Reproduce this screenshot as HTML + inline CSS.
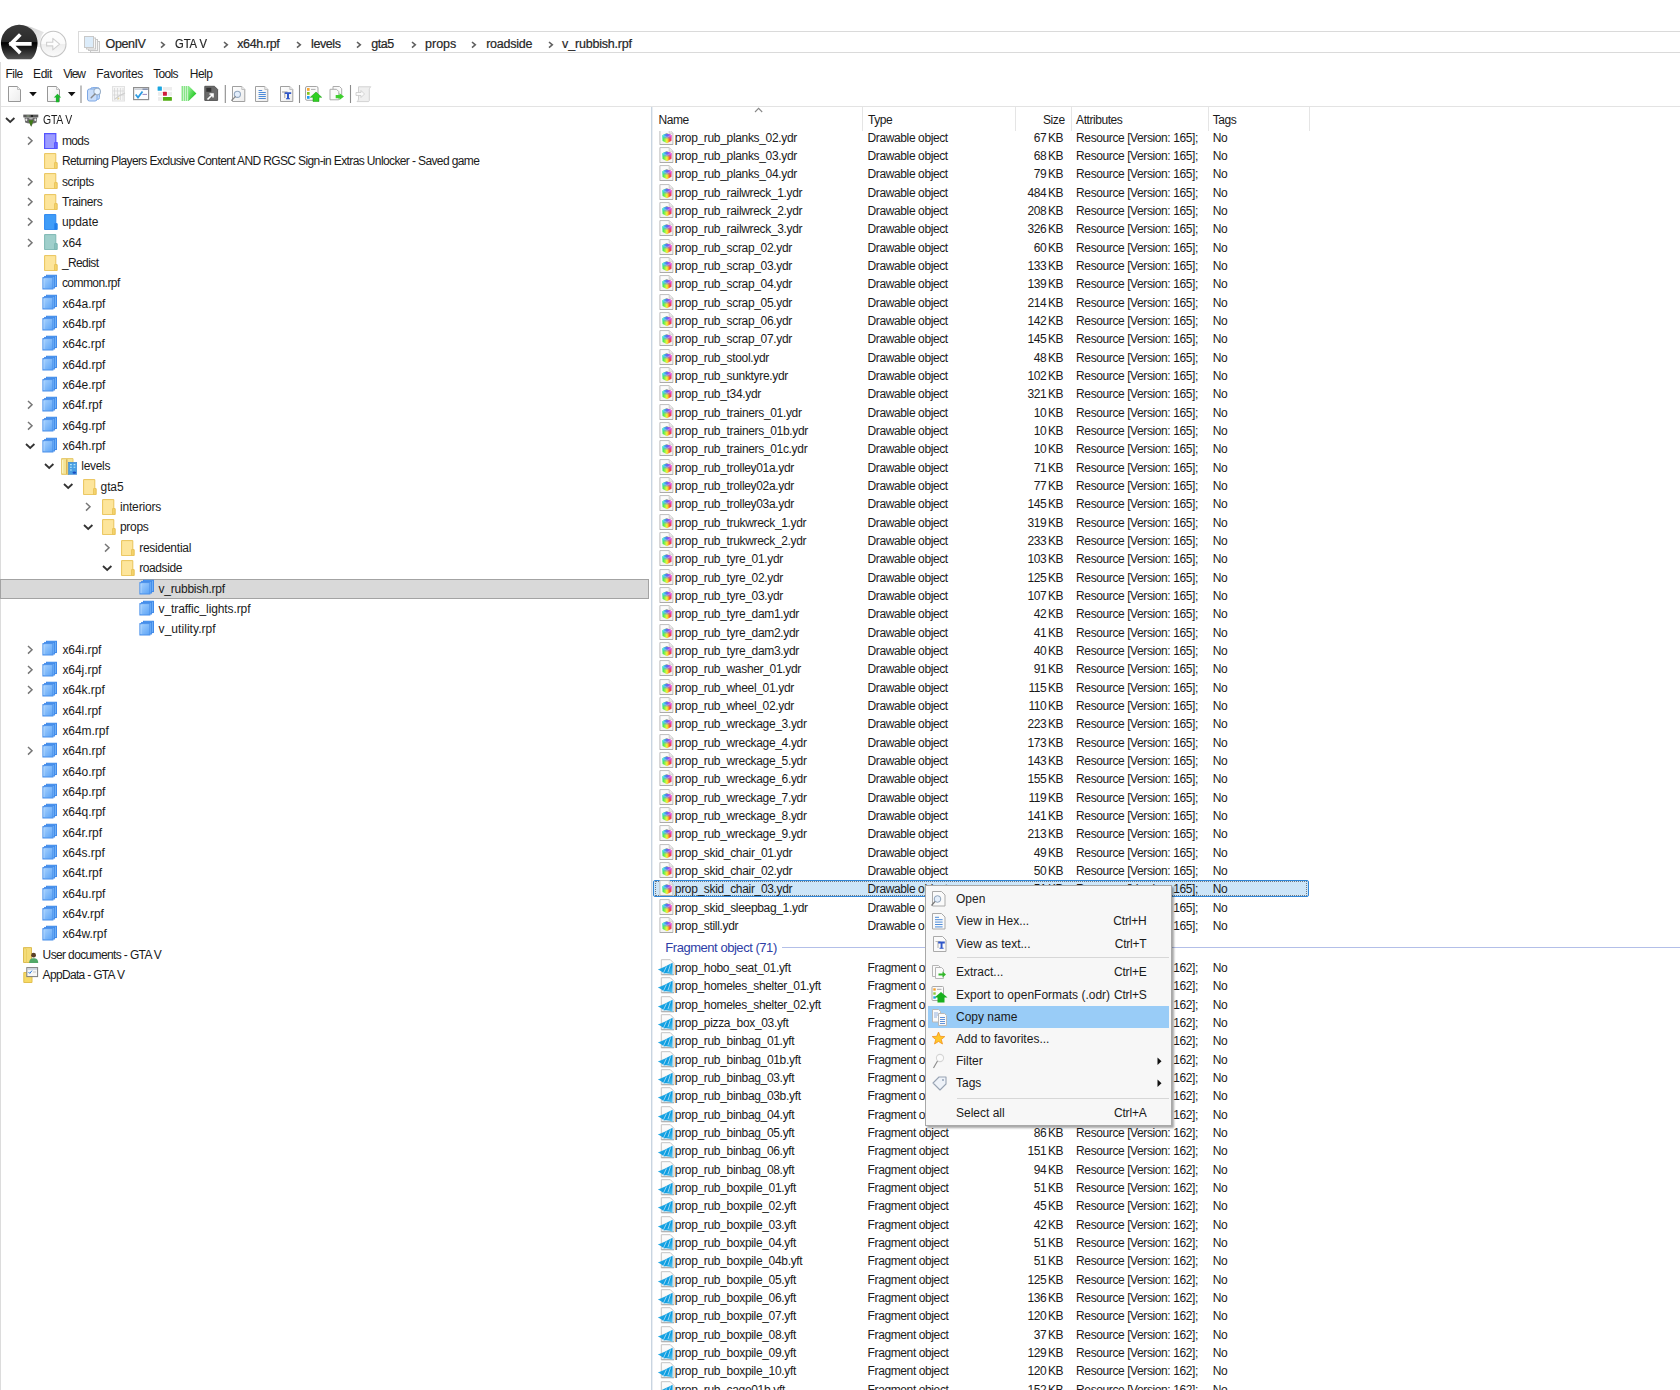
<!DOCTYPE html><html><head><meta charset="utf-8"><title>OpenIV</title><style>
*{margin:0;padding:0;box-sizing:border-box}
html,body{width:1680px;height:1390px;overflow:hidden;background:#fff}
body{position:relative;font-family:'Liberation Sans', sans-serif;font-size:12px;color:#000}
.t{position:absolute;white-space:nowrap;font-size:12px;line-height:14px;letter-spacing:-0.45px;color:#1a1a1a}
.r{text-align:right}
.ic{position:absolute;overflow:visible}
.ln{position:absolute}
</style></head><body>
<svg width="0" height="0" style="position:absolute">
<defs>
<linearGradient id="gBlue" x1="0" y1="0" x2="1" y2="1"><stop offset="0" stop-color="#a9d3ff"/><stop offset="1" stop-color="#5aa2f5"/></linearGradient>
<linearGradient id="gBlk" x1="0" y1="0" x2="0" y2="1"><stop offset="0" stop-color="#3a3a3a"/><stop offset="0.5" stop-color="#2a2a2a"/><stop offset="0.52" stop-color="#000"/><stop offset="1" stop-color="#555"/></linearGradient>
<radialGradient id="gCube" cx="0.35" cy="0.6" r="0.7"><stop offset="0" stop-color="#20e030"/><stop offset="0.5" stop-color="#f0f030"/><stop offset="1" stop-color="#f04080"/></radialGradient>
<symbol id="rpf" viewBox="0 0 16 16">
 <path d="M5 1.5H14.4V12.3H12.5" fill="#6fb2f8" stroke="#3f88e8" stroke-width="1"/>
 <rect x="4.5" y="1.2" width="10" height="11.4" fill="#70b3f8" stroke="#3f88e8" stroke-width="0.9"/>
 <rect x="2.6" y="2.4" width="10" height="11.6" fill="#78b8f9" stroke="#3f88e8" stroke-width="0.9"/>
 <rect x="0.9" y="3.6" width="10" height="11.4" fill="url(#gBlue)" stroke="#4a90ea" stroke-width="1"/>
 <path d="M2 5V14" stroke="#c4e2ff" stroke-width="0.8" opacity="0.8"/>
</symbol>
<symbol id="fy" viewBox="0 0 16 16">
 <path d="M1.6 0.6H12.8V9.6H14V15.6H1.6Z" fill="#fde59b" stroke="#e9c45a" stroke-width="1"/>
 <path d="M11.6 9.6H14V15.6H11.6Z" fill="#f5d46e" stroke="#e9c45a" stroke-width="1"/>
</symbol>
<symbol id="fp" viewBox="0 0 16 16">
 <path d="M1.6 0.6H12.8V9.6H14V15.6H1.6Z" fill="#9c9cff" stroke="#5454ff" stroke-width="1.2"/>
 <path d="M11.6 9.6H14V15.6H11.6Z" fill="#6a6aff" stroke="#5454ff" stroke-width="1"/>
</symbol>
<symbol id="fb" viewBox="0 0 16 16">
 <path d="M1.6 0.6H12.8V9.6H14V15.6H1.6Z" fill="#3f9cf8" stroke="#2b86f0" stroke-width="1"/>
 <path d="M11.6 9.6H14V15.6H11.6Z" fill="#1f7ee8" stroke="#2b86f0" stroke-width="1"/>
</symbol>
<symbol id="ft" viewBox="0 0 16 16">
 <path d="M1.6 0.6H12.8V9.6H14V15.6H1.6Z" fill="#9fcfcb" stroke="#7db8b3" stroke-width="1"/>
 <path d="M11.6 9.6H14V15.6H11.6Z" fill="#8cc2bd" stroke="#7db8b3" stroke-width="1"/>
</symbol>
<linearGradient id="gDocL" x1="0" y1="0" x2="0" y2="1"><stop offset="0" stop-color="#fdfdfd"/><stop offset="1" stop-color="#f1f1f1"/></linearGradient>
<linearGradient id="gCubeH" x1="0" y1="0" x2="1" y2="0"><stop offset="0" stop-color="#22e85a"/><stop offset="0.5" stop-color="#f4f43a"/><stop offset="0.8" stop-color="#f85a2a"/><stop offset="1" stop-color="#e8307a"/></linearGradient>
<linearGradient id="gCubeT" x1="0" y1="0" x2="1" y2="0"><stop offset="0" stop-color="#28f0f0"/><stop offset="0.5" stop-color="#5a6af0"/><stop offset="1" stop-color="#f040f0"/></linearGradient>
<linearGradient id="gMaskV" x1="0" y1="0" x2="0" y2="1"><stop offset="0" stop-color="#fff"/><stop offset="0.3" stop-color="#fff"/><stop offset="0.6" stop-color="#000"/></linearGradient>
<mask id="mTop" maskContentUnits="objectBoundingBox"><rect width="1" height="1" fill="url(#gMaskV)"/></mask>
<symbol id="ydr" viewBox="0 0 16 16">
 <path d="M0.9 0.6H10.2L13.9 4.3V15.6H0.9Z" fill="url(#gDocL)" stroke="#bdbdbd" stroke-width="1"/>
 <path d="M0.9 15.6H13.9" stroke="#a8a8a8" stroke-width="1"/>
 <path d="M10.2 0.6V4.3H13.9" fill="#eaeaea" stroke="#c8c8c8" stroke-width="0.8"/>
 <path d="M3.4 6.2L7.6 4.2L12.5 6V11.8L8 14.3L3.6 12Z" fill="url(#gCubeH)"/>
 <path d="M3.4 6.2L7.6 4.2L12.5 6V11.8L8 14.3L3.6 12Z" fill="url(#gCubeT)" mask="url(#mTop)"/>
 <path d="M3.6 6.4L8 8.2L12.3 6.2" stroke="#ffffff" stroke-width="0.5" opacity="0.5" fill="none"/>
</symbol>
<linearGradient id="gMeg" x1="0" y1="0" x2="1" y2="1"><stop offset="0" stop-color="#3ab4ea"/><stop offset="0.6" stop-color="#0a9ce0"/><stop offset="1" stop-color="#6ccdf2"/></linearGradient>
<symbol id="yft" viewBox="0 0 16 16" overflow="visible">
 <path d="M2.3 0.7H11.3L15 4.4V15.7H2.3Z" fill="url(#gDocL)" stroke="#c4c4c4" stroke-width="1"/>
 <path d="M2.3 15.7H15" stroke="#adadad" stroke-width="1"/>
 <path d="M-1.2 10.5C3 9.2 8 6.5 13.6 3.8V16.2C11 14.8 8 13.5 5 14.6C3.5 13 1 11.5 -1.2 10.5Z" fill="url(#gMeg)"/>
 <path d="M4.2 14.5L7.5 7.5M9 13L11.5 5.5" stroke="#b8e2f8" stroke-width="1" opacity="0.8"/>
</symbol>
<symbol id="gta" viewBox="0 0 16 14">
 <path d="M0.3 0.6H15.3V3.4H0.3Z" fill="#5a5a5a"/>
 <path d="M3.5 2H6.5M8 2H9.5" stroke="#8aa080" stroke-width="1"/>
 <circle cx="9" cy="2" r="1.1" fill="#151515"/>
 <path d="M1.5 3.4H14.2L13.6 8.6L11.5 9.2L9.8 9.6L8.2 12.8L6.6 9.6L4.6 9.2L2.2 8.6Z" fill="#6a6a6a"/>
 <ellipse cx="3.3" cy="5.8" rx="1" ry="1.3" fill="#e6e6e6"/>
 <ellipse cx="12.3" cy="5.8" rx="1" ry="1.3" fill="#e6e6e6"/>
 <path d="M5.8 4.2H10L9 5.2H6.8Z" fill="#cfcfcf"/>
 <path d="M5.5 6.2H10.5L8.1 12.5Z" fill="#3f7a18"/>
</symbol>
<symbol id="lvl" viewBox="0 0 16 17">
 <path d="M0.6 0.6H12V4.5H8V16.4H0.6Z" fill="#f3e497" stroke="#e6c86a" stroke-width="1"/>
 <path d="M5.8 1.2V16" stroke="#d6b04e" stroke-width="1.3"/>
 <path d="M1.6 2V15" stroke="#fbf3c0" stroke-width="1.2"/>
 <rect x="7.5" y="4.3" width="8.3" height="12" fill="#4aa0e4" stroke="#3c86d0" stroke-width="0.6"/>
 <path d="M9 6.6H10.8M12.6 6.6H14.3M9 9.3H10.8M12.6 9.3H14.3M9 12H10.8" stroke="#b8e8fa" stroke-width="1.1"/>
 <ellipse cx="13.3" cy="14.6" rx="1.8" ry="1.2" fill="#1a4cc0"/>
</symbol>
<symbol id="udoc" viewBox="0 0 16 16">
 <path d="M0.5 0.6H8.5V15.5H0.5Z" fill="#f4dc78" stroke="#dcbc52" stroke-width="1"/>
 <path d="M0.5 0.6L3.5 2V15.5" stroke="#e8cc60" stroke-width="0.8" fill="none"/>
 <circle cx="10.6" cy="8.2" r="2.4" fill="#5a4028"/>
 <path d="M6.2 16C6.2 12.6 8 11.3 10.7 11.3C13.4 11.3 15.2 12.6 15.2 16Z" fill="#52a868"/>
</symbol>
<symbol id="appd" viewBox="0 0 16 16">
 <path d="M0.8 5.5H9V15.5H0.8Z" fill="#f7da66" stroke="#e2c050" stroke-width="1"/>
 <rect x="3.8" y="0.6" width="10.8" height="9" fill="#f6f6f6" stroke="#7c7c7c" stroke-width="1"/>
 <path d="M4.3 2H14.1" stroke="#b8c4d8" stroke-width="1.2"/>
 <path d="M5.5 5L6.8 6.4L9 3.6" stroke="#2c7be0" stroke-width="1" fill="none"/>
 <path d="M10 5H13" stroke="#bbb" stroke-width="0.8"/>
</symbol>
</defs></svg>
<svg class="ic" style="left:0;top:20px" width="70" height="42" viewBox="0 20 70 42">
 <defs><linearGradient id="gTail" x1="0" y1="0" x2="1" y2="1"><stop offset="0" stop-color="#c9c9c9"/><stop offset="1" stop-color="#f4f4f4"/></linearGradient>
 <linearGradient id="gFwd" x1="0" y1="0" x2="0" y2="1"><stop offset="0" stop-color="#ffffff"/><stop offset="0.5" stop-color="#fafafa"/><stop offset="0.52" stop-color="#eeeeee"/><stop offset="1" stop-color="#fbfbfb"/></linearGradient></defs>
 <path d="M17 24.8 C27 24.5 36 29 44 32.2 C41 35 40 40 40.6 47 L36 47 C36 36 28 27 17 24.8Z" fill="url(#gTail)"/>
 <path d="M1.3 46.5 A18.3 18.3 0 1 1 37.2 46.5 C36.5 52 34 57.5 31 59.2 H8 C5 57.5 2 52 1.3 46.5Z" fill="url(#gBlk)"/>
 <path d="M11 43.8 L19 35.8 M11 43.8 L19 51.8 M11 43.8 H29.8" stroke="#fff" stroke-width="3.7" fill="none" stroke-linecap="square"/>
 <circle cx="53.3" cy="44" r="12.7" fill="url(#gFwd)" stroke="#c4c4c4" stroke-width="1.1"/>
 <path d="M46.6 42.3 H52.8 V38.4 L59.6 44.1 L52.8 49.8 V45.9 H46.6Z" fill="#fdfdfd" stroke="#cfcfcf" stroke-width="1.1" stroke-linejoin="round"/>
</svg>
<div class="ln" style="left:78px;top:31px;width:1610px;height:22px;border:1px solid #dadada;border-right:none"></div>
<svg class="ic" style="left:84px;top:36px" width="17" height="17" viewBox="0 0 17 17">
 <rect x="6.5" y="5.5" width="9" height="11" fill="#f4f4f4" stroke="#c8c8c8"/>
 <rect x="4.5" y="3.5" width="9" height="11" fill="#f6f6f6" stroke="#c8c8c8"/>
 <rect x="2.5" y="2" width="9" height="11" fill="#f8f8f8" stroke="#c8c8c8"/>
 <rect x="0.5" y="0.5" width="9" height="11" fill="#dcecfa" stroke="#c8c8c8"/>
</svg>
<div class="t" style="left:105.6px;top:36.5px;font-size:12.5px;letter-spacing:-0.42px;color:#222;-webkit-text-stroke:0.2px #333">OpenIV</div>
<div class="t" style="left:174.7px;top:36.5px;font-size:12.5px;letter-spacing:-0.1px;transform:scaleX(0.9);transform-origin:0 0;color:#222;-webkit-text-stroke:0.2px #333">GTA V</div>
<div class="t" style="left:237.2px;top:36.5px;font-size:12.5px;letter-spacing:-0.36px;color:#222;-webkit-text-stroke:0.2px #333">x64h.rpf</div>
<div class="t" style="left:311.1px;top:36.5px;font-size:12.5px;letter-spacing:-0.42px;color:#222;-webkit-text-stroke:0.2px #333">levels</div>
<div class="t" style="left:371.3px;top:36.5px;font-size:12.5px;letter-spacing:-0.5px;color:#222;-webkit-text-stroke:0.2px #333">gta5</div>
<div class="t" style="left:425.1px;top:36.5px;font-size:12.5px;letter-spacing:-0.03px;color:#222;-webkit-text-stroke:0.2px #333">props</div>
<div class="t" style="left:486.2px;top:36.5px;font-size:12.5px;letter-spacing:-0.23px;color:#222;-webkit-text-stroke:0.2px #333">roadside</div>
<div class="t" style="left:562.1px;top:36.5px;font-size:12.5px;letter-spacing:-0.19px;color:#222;-webkit-text-stroke:0.2px #333">v_rubbish.rpf</div>
<svg class="ic" style="left:159.7px;top:41px" width="6" height="8"><path d="M1 1L4.3 3.8L1 6.6" stroke="#606060" stroke-width="1.6" fill="none"/></svg>
<svg class="ic" style="left:222.8px;top:41px" width="6" height="8"><path d="M1 1L4.3 3.8L1 6.6" stroke="#606060" stroke-width="1.6" fill="none"/></svg>
<svg class="ic" style="left:296.0px;top:41px" width="6" height="8"><path d="M1 1L4.3 3.8L1 6.6" stroke="#606060" stroke-width="1.6" fill="none"/></svg>
<svg class="ic" style="left:356.2px;top:41px" width="6" height="8"><path d="M1 1L4.3 3.8L1 6.6" stroke="#606060" stroke-width="1.6" fill="none"/></svg>
<svg class="ic" style="left:410.6px;top:41px" width="6" height="8"><path d="M1 1L4.3 3.8L1 6.6" stroke="#606060" stroke-width="1.6" fill="none"/></svg>
<svg class="ic" style="left:471.2px;top:41px" width="6" height="8"><path d="M1 1L4.3 3.8L1 6.6" stroke="#606060" stroke-width="1.6" fill="none"/></svg>
<svg class="ic" style="left:547.6px;top:41px" width="6" height="8"><path d="M1 1L4.3 3.8L1 6.6" stroke="#606060" stroke-width="1.6" fill="none"/></svg>
<div class="ln" style="left:0;top:62px;width:1px;height:1328px;background:#dcdcdc"></div>
<div class="t" style="left:5.6px;top:67px;letter-spacing:-0.6px">File</div>
<div class="t" style="left:33.1px;top:67px;letter-spacing:-0.47px">Edit</div>
<div class="t" style="left:63.2px;top:67px;letter-spacing:-1.0px">View</div>
<div class="t" style="left:96.2px;top:67px;letter-spacing:-0.28px">Favorites</div>
<div class="t" style="left:153.2px;top:67px;letter-spacing:-0.67px">Tools</div>
<div class="t" style="left:189.8px;top:67px;letter-spacing:-0.53px">Help</div>
<svg class="ic" style="left:0;top:84px" width="380" height="22" viewBox="0 84 380 22">
 <defs>
 <linearGradient id="gPlay" x1="0" y1="0" x2="1" y2="1"><stop offset="0" stop-color="#9af59a"/><stop offset="1" stop-color="#00b800"/></linearGradient>
 <linearGradient id="gDoc" x1="0" y1="0" x2="1" y2="1"><stop offset="0" stop-color="#ffffff"/><stop offset="1" stop-color="#ececec"/></linearGradient>
 </defs>
 <path d="M8.5 86.5H17.5L20.5 89.5V101.5H8.5Z" fill="url(#gDoc)" stroke="#979797"/>
 <path d="M17.5 86.5V89.5H20.5" fill="#eee" stroke="#b5b5b5" stroke-width="0.8"/>
 <path d="M29.2 92H36.8L33 96.2Z" fill="#111"/>
 <path d="M47.5 86.5H56.5L59.5 89.5V101.5H47.5Z" fill="url(#gDoc)" stroke="#979797"/>
 <path d="M56.5 86.5V89.5H59.5" fill="#eee" stroke="#b5b5b5" stroke-width="0.8"/>
 <path d="M57.5 93.8L61.2 97.6H59.1V102.2H55.9V97.6H53.8Z" fill="#1bb52a"/>
 <path d="M67.9 92H75.5L71.7 96.2Z" fill="#111"/>
 <path d="M81 85.4V103" stroke="#8c8c8c" stroke-width="1.1"/>
 <rect x="90.5" y="87.5" width="9" height="12" rx="2" fill="#bcd6f8" stroke="#86aee6"/>
 <rect x="87.5" y="89" width="9.5" height="12" rx="2" fill="#c9defb" stroke="#7ea8e4"/>
 <circle cx="97.2" cy="91.6" r="3.3" fill="#e8f3ff" stroke="#9bb0c8" stroke-width="1.1"/>
 <path d="M95 94L91.2 97.8" stroke="#8a8a8a" stroke-width="1.4" stroke-linecap="round"/>
 <rect x="112.5" y="86.5" width="12" height="14.5" fill="#f6f6f6" stroke="#e2e2e2"/>
 <path d="M114.5 88V100M117.5 88V100M120.5 88V100M123 88V100M113 91H124M113 95H124" stroke="#d4d4d4" stroke-width="0.7"/>
 <path d="M115 99L119 96L125 93" stroke="#cfcfcf" stroke-width="1.2" fill="none"/>
 <circle cx="118.5" cy="98.5" r="0.9" fill="#e8d8a0"/>
 <rect x="133.6" y="87.6" width="15" height="12" fill="#fdfdfd" stroke="#8f8f8f" stroke-width="1.2"/>
 <path d="M134.5 89.2H147.8" stroke="#c5cad3" stroke-width="1.3"/>
 <path d="M142.5 89.2H147.8" stroke="#7c8aa8" stroke-width="1.3"/>
 <path d="M135.7 94.5L138 97.6L142.5 91.5" stroke="#2c9ae0" stroke-width="1.8" fill="none"/>
 <path d="M142.5 94.4H147" stroke="#8b7ab8" stroke-width="0.9"/>
 <rect x="157.6" y="86.5" width="4.3" height="4.3" rx="0.6" fill="#1aa6e0"/>
 <rect x="163" y="87" width="9" height="3.5" fill="#ededed"/>
 <rect x="158" y="91.8" width="4" height="4" fill="#ededed"/>
 <rect x="162.9" y="91.8" width="4" height="4" rx="0.5" fill="#cf1a3a"/>
 <rect x="167.5" y="91.8" width="4.5" height="4" fill="#ededed"/>
 <rect x="158" y="97" width="4" height="3.8" fill="#ededed"/>
 <rect x="162.9" y="97" width="9" height="3.8" rx="0.5" fill="#52ac12"/>
 <path d="M182.2 86V101M184.2 86V101M186.2 86V101M188.2 86V101" stroke="#3ed43e" stroke-width="0.9"/>
 <path d="M188.6 85.8L196.4 93.4L188.6 101Z" fill="url(#gPlay)"/>
 <path d="M204.8 86.3H214.5L217.6 89.4V100.4H204.8Z" fill="#6a6a6a" stroke="#555" rx="1"/>
 <rect x="206.3" y="87.8" width="5" height="4" fill="#333"/>
 <path d="M207.5 99.5L212.5 94.5M209.5 94H213V97.5" stroke="#fff" stroke-width="1.6" fill="none"/>
 <path d="M225.3 85V103" stroke="#8c8c8c" stroke-width="1.1"/>
 <path d="M232.5 86.5H241.8L244.8 89.5V101.5H232.5Z" fill="url(#gDoc)" stroke="#a0a0a0"/>
 <path d="M241.8 86.5V89.5H244.8" fill="#eee" stroke="#b5b5b5" stroke-width="0.8"/>
 <circle cx="237.4" cy="94.3" r="3.1" fill="#e3eefc" stroke="#94a8c0" stroke-width="1.1"/>
 <path d="M235.3 96.6L231.8 100.3" stroke="#888" stroke-width="1.3" stroke-linecap="round"/>
 <path d="M255.5 86.5H264.8L267.8 89.5V101.5H255.5Z" fill="url(#gDoc)" stroke="#a0a0a0"/>
 <path d="M264.8 86.5V89.5H267.8" fill="#eee" stroke="#b5b5b5" stroke-width="0.8"/>
 <path d="M258.6 90.5H262.2M258.6 92.5H265.8M258.6 94.5H265.8M258.6 96.5H265.8M258.6 98.5H265.8" stroke="#3a7fd5" stroke-width="0.9"/>
 <path d="M280.5 86.5H289.8L292.8 89.5V101.5H280.5Z" fill="url(#gDoc)" stroke="#a0a0a0"/>
 <path d="M289.8 86.5V89.5H292.8" fill="#eee" stroke="#b5b5b5" stroke-width="0.8"/>
 <path d="M282 92H287.5M284.7 92V98" stroke="#bbb" stroke-width="1.3"/>
 <path d="M284.8 92.2H291.2V94H289V98.2H290V99.2H286V98.2H287V94H284.8Z" fill="#2f56c8"/>
 <path d="M299.5 85V103" stroke="#8c8c8c" stroke-width="1.1"/>
 <rect x="305.5" y="86.5" width="12.5" height="13.8" rx="1.5" fill="#fafafa" stroke="#a5a5a5"/>
 <rect x="307" y="88" width="2.6" height="2.8" fill="#f9a731"/>
 <rect x="307" y="92" width="2.6" height="2.8" fill="#86c620"/>
 <rect x="307" y="96" width="2.6" height="2.8" fill="#1e9cf0"/>
 <path d="M311 89.4H315.5" stroke="#999" stroke-width="0.8"/>
 <path d="M316 92L321.7 97.3H319V101.5H313V97.3H310.3Z" fill="#2fcf22" stroke="#16960f" stroke-width="0.5"/>
 <path d="M333 86.5H339.5L341.7 88.7V96H333Z" fill="#fafafa" stroke="#acacac"/>
 <path d="M330 89.3H336.5L338.8 91.6V99.8H330Z" fill="#fafafa" stroke="#acacac"/>
 <path d="M335.7 95H339.5V93.2L344 96.6L339.5 100V98.2H335.7Z" fill="#3fcf2f"/>
 <path d="M350.5 85V103" stroke="#8c8c8c" stroke-width="1.1"/>
 <path d="M358.5 86.8H370.8C369.5 88 369.3 89 369.3 90V100.5C369.3 101 369 101.6 368 101.6H357C358 100.8 358.5 100 358.5 99Z" fill="#efefef" stroke="#d2d2d2"/>
 <path d="M356 92.5H361V90.5L364.5 94L361 97.5V95.5H356Z" fill="#fafafa" stroke="#c9c9c9" stroke-width="0.8"/>
</svg>
<div class="ln" style="left:1px;top:106px;width:1679px;height:1px;background:#e3e3e3"></div>
<div class="ln" style="left:0;top:578.7px;width:649px;height:20px;background:#d9d9d9;border:1px solid #a3a3a3"></div>
<svg class="ic" style="left:23.0px;top:114.2px" width="16" height="14"><use href="#gta"/></svg>
<div class="t" style="left:42.6px;top:113.4px;letter-spacing:-0.2px;transform:scaleX(0.87);transform-origin:0 0">GTA V</div>
<svg class="ic" style="left:5.2px;top:117.1px" width="11" height="7"><path d="M1 1L5.2 5L9.4 1" stroke="#333" stroke-width="1.8" fill="none"/></svg>
<svg class="ic" style="left:43.1px;top:132.6px" width="16" height="16"><use href="#fp"/></svg>
<div class="t" style="left:61.9px;top:133.8px;letter-spacing:-0.6px">mods</div>
<svg class="ic" style="left:26.6px;top:135.8px" width="7" height="11"><path d="M1 1L5 4.8L1 8.6" stroke="#777" stroke-width="1.5" fill="none"/></svg>
<svg class="ic" style="left:43.1px;top:152.9px" width="16" height="16"><use href="#fy"/></svg>
<div class="t" style="left:61.9px;top:154.1px;letter-spacing:-0.62px">Returning Players Exclusive Content AND RGSC Sign-in Extras Unlocker - Saved game</div>
<svg class="ic" style="left:43.1px;top:173.3px" width="16" height="16"><use href="#fy"/></svg>
<div class="t" style="left:61.9px;top:174.5px;letter-spacing:-0.37px">scripts</div>
<svg class="ic" style="left:26.6px;top:176.6px" width="7" height="11"><path d="M1 1L5 4.8L1 8.6" stroke="#777" stroke-width="1.5" fill="none"/></svg>
<svg class="ic" style="left:43.1px;top:193.6px" width="16" height="16"><use href="#fy"/></svg>
<div class="t" style="left:61.9px;top:194.8px;letter-spacing:-0.4px">Trainers</div>
<svg class="ic" style="left:26.6px;top:196.9px" width="7" height="11"><path d="M1 1L5 4.8L1 8.6" stroke="#777" stroke-width="1.5" fill="none"/></svg>
<svg class="ic" style="left:43.1px;top:214.0px" width="16" height="16"><use href="#fb"/></svg>
<div class="t" style="left:61.9px;top:215.2px;letter-spacing:-0.04px">update</div>
<svg class="ic" style="left:26.6px;top:217.2px" width="7" height="11"><path d="M1 1L5 4.8L1 8.6" stroke="#777" stroke-width="1.5" fill="none"/></svg>
<svg class="ic" style="left:43.1px;top:234.3px" width="16" height="16"><use href="#ft"/></svg>
<div class="t" style="left:62.4px;top:235.5px;letter-spacing:0px">x64</div>
<svg class="ic" style="left:26.6px;top:237.6px" width="7" height="11"><path d="M1 1L5 4.8L1 8.6" stroke="#777" stroke-width="1.5" fill="none"/></svg>
<svg class="ic" style="left:43.1px;top:254.7px" width="16" height="16"><use href="#fy"/></svg>
<div class="t" style="left:61.9px;top:255.9px;letter-spacing:-0.6px">_Redist</div>
<svg class="ic" style="left:42.1px;top:274.0px" width="16" height="16"><use href="#rpf"/></svg>
<div class="t" style="left:61.9px;top:276.2px;letter-spacing:-0.55px">common.rpf</div>
<svg class="ic" style="left:42.1px;top:294.4px" width="16" height="16"><use href="#rpf"/></svg>
<div class="t" style="left:62.4px;top:296.6px;letter-spacing:-0.05px">x64a.rpf</div>
<svg class="ic" style="left:42.1px;top:314.7px" width="16" height="16"><use href="#rpf"/></svg>
<div class="t" style="left:62.4px;top:316.9px;letter-spacing:-0.05px">x64b.rpf</div>
<svg class="ic" style="left:42.1px;top:335.1px" width="16" height="16"><use href="#rpf"/></svg>
<div class="t" style="left:62.4px;top:337.2px;letter-spacing:-0.05px">x64c.rpf</div>
<svg class="ic" style="left:42.1px;top:355.4px" width="16" height="16"><use href="#rpf"/></svg>
<div class="t" style="left:62.4px;top:357.6px;letter-spacing:-0.05px">x64d.rpf</div>
<svg class="ic" style="left:42.1px;top:375.8px" width="16" height="16"><use href="#rpf"/></svg>
<div class="t" style="left:62.4px;top:378.0px;letter-spacing:-0.05px">x64e.rpf</div>
<svg class="ic" style="left:42.1px;top:396.1px" width="16" height="16"><use href="#rpf"/></svg>
<div class="t" style="left:62.4px;top:398.3px;letter-spacing:-0.05px">x64f.rpf</div>
<svg class="ic" style="left:26.6px;top:400.4px" width="7" height="11"><path d="M1 1L5 4.8L1 8.6" stroke="#777" stroke-width="1.5" fill="none"/></svg>
<svg class="ic" style="left:42.1px;top:416.4px" width="16" height="16"><use href="#rpf"/></svg>
<div class="t" style="left:62.4px;top:418.6px;letter-spacing:-0.05px">x64g.rpf</div>
<svg class="ic" style="left:26.6px;top:420.8px" width="7" height="11"><path d="M1 1L5 4.8L1 8.6" stroke="#777" stroke-width="1.5" fill="none"/></svg>
<svg class="ic" style="left:42.1px;top:436.8px" width="16" height="16"><use href="#rpf"/></svg>
<div class="t" style="left:62.4px;top:439.0px;letter-spacing:-0.05px">x64h.rpf</div>
<svg class="ic" style="left:24.5px;top:442.7px" width="11" height="7"><path d="M1 1L5.2 5L9.4 1" stroke="#333" stroke-width="1.8" fill="none"/></svg>
<svg class="ic" style="left:61.0px;top:457.9px" width="16" height="17"><use href="#lvl"/></svg>
<div class="t" style="left:81.3px;top:459.4px;letter-spacing:-0.32px">levels</div>
<svg class="ic" style="left:43.9px;top:463.1px" width="11" height="7"><path d="M1 1L5.2 5L9.4 1" stroke="#333" stroke-width="1.8" fill="none"/></svg>
<svg class="ic" style="left:81.8px;top:478.5px" width="16" height="16"><use href="#fy"/></svg>
<div class="t" style="left:100.6px;top:479.7px;letter-spacing:-0.13px">gta5</div>
<svg class="ic" style="left:63.2px;top:483.4px" width="11" height="7"><path d="M1 1L5.2 5L9.4 1" stroke="#333" stroke-width="1.8" fill="none"/></svg>
<svg class="ic" style="left:101.1px;top:498.9px" width="16" height="16"><use href="#fy"/></svg>
<div class="t" style="left:119.9px;top:500.1px;letter-spacing:-0.15px">interiors</div>
<svg class="ic" style="left:84.6px;top:502.2px" width="7" height="11"><path d="M1 1L5 4.8L1 8.6" stroke="#777" stroke-width="1.5" fill="none"/></svg>
<svg class="ic" style="left:101.1px;top:519.2px" width="16" height="16"><use href="#fy"/></svg>
<div class="t" style="left:119.9px;top:520.4px;letter-spacing:-0.28px">props</div>
<svg class="ic" style="left:82.5px;top:524.1px" width="11" height="7"><path d="M1 1L5.2 5L9.4 1" stroke="#333" stroke-width="1.8" fill="none"/></svg>
<svg class="ic" style="left:120.4px;top:539.5px" width="16" height="16"><use href="#fy"/></svg>
<div class="t" style="left:139.2px;top:540.8px;letter-spacing:-0.25px">residential</div>
<svg class="ic" style="left:103.9px;top:542.9px" width="7" height="11"><path d="M1 1L5 4.8L1 8.6" stroke="#777" stroke-width="1.5" fill="none"/></svg>
<svg class="ic" style="left:120.4px;top:559.9px" width="16" height="16"><use href="#fy"/></svg>
<div class="t" style="left:139.2px;top:561.1px;letter-spacing:-0.41px">roadside</div>
<svg class="ic" style="left:101.8px;top:564.8px" width="11" height="7"><path d="M1 1L5.2 5L9.4 1" stroke="#333" stroke-width="1.8" fill="none"/></svg>
<svg class="ic" style="left:138.8px;top:579.2px" width="16" height="16"><use href="#rpf"/></svg>
<div class="t" style="left:158.6px;top:581.5px;letter-spacing:-0.24px">v_rubbish.rpf</div>
<svg class="ic" style="left:138.8px;top:599.6px" width="16" height="16"><use href="#rpf"/></svg>
<div class="t" style="left:158.6px;top:601.8px;letter-spacing:-0.1px">v_traffic_lights.rpf</div>
<svg class="ic" style="left:138.8px;top:620.0px" width="16" height="16"><use href="#rpf"/></svg>
<div class="t" style="left:158.6px;top:622.2px;letter-spacing:0.05px">v_utility.rpf</div>
<svg class="ic" style="left:42.1px;top:640.3px" width="16" height="16"><use href="#rpf"/></svg>
<div class="t" style="left:62.4px;top:642.5px;letter-spacing:-0.05px">x64i.rpf</div>
<svg class="ic" style="left:26.6px;top:644.6px" width="7" height="11"><path d="M1 1L5 4.8L1 8.6" stroke="#777" stroke-width="1.5" fill="none"/></svg>
<svg class="ic" style="left:42.1px;top:660.6px" width="16" height="16"><use href="#rpf"/></svg>
<div class="t" style="left:62.4px;top:662.9px;letter-spacing:-0.05px">x64j.rpf</div>
<svg class="ic" style="left:26.6px;top:665.0px" width="7" height="11"><path d="M1 1L5 4.8L1 8.6" stroke="#777" stroke-width="1.5" fill="none"/></svg>
<svg class="ic" style="left:42.1px;top:681.0px" width="16" height="16"><use href="#rpf"/></svg>
<div class="t" style="left:62.4px;top:683.2px;letter-spacing:-0.05px">x64k.rpf</div>
<svg class="ic" style="left:26.6px;top:685.3px" width="7" height="11"><path d="M1 1L5 4.8L1 8.6" stroke="#777" stroke-width="1.5" fill="none"/></svg>
<svg class="ic" style="left:42.1px;top:701.4px" width="16" height="16"><use href="#rpf"/></svg>
<div class="t" style="left:62.4px;top:703.6px;letter-spacing:-0.05px">x64l.rpf</div>
<svg class="ic" style="left:42.1px;top:721.7px" width="16" height="16"><use href="#rpf"/></svg>
<div class="t" style="left:62.4px;top:723.9px;letter-spacing:-0.05px">x64m.rpf</div>
<svg class="ic" style="left:42.1px;top:742.0px" width="16" height="16"><use href="#rpf"/></svg>
<div class="t" style="left:62.4px;top:744.2px;letter-spacing:-0.05px">x64n.rpf</div>
<svg class="ic" style="left:26.6px;top:746.4px" width="7" height="11"><path d="M1 1L5 4.8L1 8.6" stroke="#777" stroke-width="1.5" fill="none"/></svg>
<svg class="ic" style="left:42.1px;top:762.4px" width="16" height="16"><use href="#rpf"/></svg>
<div class="t" style="left:62.4px;top:764.6px;letter-spacing:-0.05px">x64o.rpf</div>
<svg class="ic" style="left:42.1px;top:782.8px" width="16" height="16"><use href="#rpf"/></svg>
<div class="t" style="left:62.4px;top:785.0px;letter-spacing:-0.05px">x64p.rpf</div>
<svg class="ic" style="left:42.1px;top:803.1px" width="16" height="16"><use href="#rpf"/></svg>
<div class="t" style="left:62.4px;top:805.3px;letter-spacing:-0.05px">x64q.rpf</div>
<svg class="ic" style="left:42.1px;top:823.4px" width="16" height="16"><use href="#rpf"/></svg>
<div class="t" style="left:62.4px;top:825.6px;letter-spacing:-0.05px">x64r.rpf</div>
<svg class="ic" style="left:42.1px;top:843.8px" width="16" height="16"><use href="#rpf"/></svg>
<div class="t" style="left:62.4px;top:846.0px;letter-spacing:-0.05px">x64s.rpf</div>
<svg class="ic" style="left:42.1px;top:864.1px" width="16" height="16"><use href="#rpf"/></svg>
<div class="t" style="left:62.4px;top:866.4px;letter-spacing:-0.05px">x64t.rpf</div>
<svg class="ic" style="left:42.1px;top:884.5px" width="16" height="16"><use href="#rpf"/></svg>
<div class="t" style="left:62.4px;top:886.7px;letter-spacing:-0.05px">x64u.rpf</div>
<svg class="ic" style="left:42.1px;top:904.9px" width="16" height="16"><use href="#rpf"/></svg>
<div class="t" style="left:62.4px;top:907.1px;letter-spacing:-0.05px">x64v.rpf</div>
<svg class="ic" style="left:42.1px;top:925.2px" width="16" height="16"><use href="#rpf"/></svg>
<div class="t" style="left:62.4px;top:927.4px;letter-spacing:-0.05px">x64w.rpf</div>
<svg class="ic" style="left:23.3px;top:946.5px" width="16" height="16"><use href="#udoc"/></svg>
<div class="t" style="left:42.6px;top:947.8px;letter-spacing:-0.63px">User documents - GTA V</div>
<svg class="ic" style="left:23.3px;top:966.9px" width="16" height="16"><use href="#appd"/></svg>
<div class="t" style="left:42.6px;top:968.1px;letter-spacing:-0.68px">AppData - GTA V</div>
<div class="ln" style="left:651px;top:107px;width:1px;height:1283px;background:#c9d5e1"></div><div class="ln" style="left:652px;top:107px;width:1px;height:1283px;background:#e9eef3"></div>
<div class="t" style="left:658.5px;top:112.8px;">Name</div>
<div class="t" style="left:868.1px;top:112.8px;">Type</div>
<div class="t" style="left:1076.1px;top:112.8px;">Attributes</div>
<div class="t" style="left:1212.8px;top:112.8px;">Tags</div>
<div class="t r" style="right:615.4px;top:112.8px;">Size</div>
<div class="ln" style="left:862.4px;top:107px;width:1px;height:24px;background:#e5e5e5"></div>
<div class="ln" style="left:1015.3px;top:107px;width:1px;height:24px;background:#e5e5e5"></div>
<div class="ln" style="left:1071.0px;top:107px;width:1px;height:24px;background:#e5e5e5"></div>
<div class="ln" style="left:1207.5px;top:107px;width:1px;height:24px;background:#e5e5e5"></div>
<div class="ln" style="left:1309.3px;top:107px;width:1px;height:24px;background:#e5e5e5"></div>
<svg class="ic" style="left:754px;top:106.5px" width="10" height="6"><path d="M1 5L4.6 1.3L8.2 5" stroke="#888" stroke-width="1.1" fill="none"/></svg>
<div class="ln" style="left:653px;top:131px;width:1027px;height:1259px;overflow:hidden">
<div class="ln" style="left:0.2px;top:748.5px;width:656px;height:17.5px;background:#cce5f8;border:1px solid #2f86d8;border-radius:2px"></div>
<div class="ln" style="left:2.0px;top:750.0px;width:652px;height:14.5px;border:1px dotted #333;opacity:0.6"></div>
<svg class="ic" style="left:5.5px;top:-2.3px" width="16" height="16"><use href="#ydr"/></svg>
<div class="t" style="left:21.8px;top:-0.3px;letter-spacing:-0.33px">prop_rub_planks_02.ydr</div>
<div class="t" style="left:214.6px;top:-0.3px;letter-spacing:-0.39px">Drawable object</div>
<div class="t r" style="right:617.0px;top:-0.3px;word-spacing:-1.2px">67 KB</div>
<div class="t" style="left:423.1px;top:-0.3px;letter-spacing:-0.4px">Resource [Version: 165];</div>
<div class="t" style="left:559.8px;top:-0.3px;">No</div>
<svg class="ic" style="left:5.5px;top:16.0px" width="16" height="16"><use href="#ydr"/></svg>
<div class="t" style="left:21.8px;top:18.0px;letter-spacing:-0.33px">prop_rub_planks_03.ydr</div>
<div class="t" style="left:214.6px;top:18.0px;letter-spacing:-0.39px">Drawable object</div>
<div class="t r" style="right:617.0px;top:18.0px;word-spacing:-1.2px">68 KB</div>
<div class="t" style="left:423.1px;top:18.0px;letter-spacing:-0.4px">Resource [Version: 165];</div>
<div class="t" style="left:559.8px;top:18.0px;">No</div>
<svg class="ic" style="left:5.5px;top:34.4px" width="16" height="16"><use href="#ydr"/></svg>
<div class="t" style="left:21.8px;top:36.4px;letter-spacing:-0.33px">prop_rub_planks_04.ydr</div>
<div class="t" style="left:214.6px;top:36.4px;letter-spacing:-0.39px">Drawable object</div>
<div class="t r" style="right:617.0px;top:36.4px;word-spacing:-1.2px">79 KB</div>
<div class="t" style="left:423.1px;top:36.4px;letter-spacing:-0.4px">Resource [Version: 165];</div>
<div class="t" style="left:559.8px;top:36.4px;">No</div>
<svg class="ic" style="left:5.5px;top:52.7px" width="16" height="16"><use href="#ydr"/></svg>
<div class="t" style="left:21.8px;top:54.7px;letter-spacing:-0.33px">prop_rub_railwreck_1.ydr</div>
<div class="t" style="left:214.6px;top:54.7px;letter-spacing:-0.39px">Drawable object</div>
<div class="t r" style="right:617.0px;top:54.7px;word-spacing:-1.2px">484 KB</div>
<div class="t" style="left:423.1px;top:54.7px;letter-spacing:-0.4px">Resource [Version: 165];</div>
<div class="t" style="left:559.8px;top:54.7px;">No</div>
<svg class="ic" style="left:5.5px;top:71.0px" width="16" height="16"><use href="#ydr"/></svg>
<div class="t" style="left:21.8px;top:73.0px;letter-spacing:-0.33px">prop_rub_railwreck_2.ydr</div>
<div class="t" style="left:214.6px;top:73.0px;letter-spacing:-0.39px">Drawable object</div>
<div class="t r" style="right:617.0px;top:73.0px;word-spacing:-1.2px">208 KB</div>
<div class="t" style="left:423.1px;top:73.0px;letter-spacing:-0.4px">Resource [Version: 165];</div>
<div class="t" style="left:559.8px;top:73.0px;">No</div>
<svg class="ic" style="left:5.5px;top:89.3px" width="16" height="16"><use href="#ydr"/></svg>
<div class="t" style="left:21.8px;top:91.3px;letter-spacing:-0.33px">prop_rub_railwreck_3.ydr</div>
<div class="t" style="left:214.6px;top:91.3px;letter-spacing:-0.39px">Drawable object</div>
<div class="t r" style="right:617.0px;top:91.3px;word-spacing:-1.2px">326 KB</div>
<div class="t" style="left:423.1px;top:91.3px;letter-spacing:-0.4px">Resource [Version: 165];</div>
<div class="t" style="left:559.8px;top:91.3px;">No</div>
<svg class="ic" style="left:5.5px;top:107.7px" width="16" height="16"><use href="#ydr"/></svg>
<div class="t" style="left:21.8px;top:109.7px;letter-spacing:-0.33px">prop_rub_scrap_02.ydr</div>
<div class="t" style="left:214.6px;top:109.7px;letter-spacing:-0.39px">Drawable object</div>
<div class="t r" style="right:617.0px;top:109.7px;word-spacing:-1.2px">60 KB</div>
<div class="t" style="left:423.1px;top:109.7px;letter-spacing:-0.4px">Resource [Version: 165];</div>
<div class="t" style="left:559.8px;top:109.7px;">No</div>
<svg class="ic" style="left:5.5px;top:126.0px" width="16" height="16"><use href="#ydr"/></svg>
<div class="t" style="left:21.8px;top:128.0px;letter-spacing:-0.33px">prop_rub_scrap_03.ydr</div>
<div class="t" style="left:214.6px;top:128.0px;letter-spacing:-0.39px">Drawable object</div>
<div class="t r" style="right:617.0px;top:128.0px;word-spacing:-1.2px">133 KB</div>
<div class="t" style="left:423.1px;top:128.0px;letter-spacing:-0.4px">Resource [Version: 165];</div>
<div class="t" style="left:559.8px;top:128.0px;">No</div>
<svg class="ic" style="left:5.5px;top:144.3px" width="16" height="16"><use href="#ydr"/></svg>
<div class="t" style="left:21.8px;top:146.3px;letter-spacing:-0.33px">prop_rub_scrap_04.ydr</div>
<div class="t" style="left:214.6px;top:146.3px;letter-spacing:-0.39px">Drawable object</div>
<div class="t r" style="right:617.0px;top:146.3px;word-spacing:-1.2px">139 KB</div>
<div class="t" style="left:423.1px;top:146.3px;letter-spacing:-0.4px">Resource [Version: 165];</div>
<div class="t" style="left:559.8px;top:146.3px;">No</div>
<svg class="ic" style="left:5.5px;top:162.7px" width="16" height="16"><use href="#ydr"/></svg>
<div class="t" style="left:21.8px;top:164.7px;letter-spacing:-0.33px">prop_rub_scrap_05.ydr</div>
<div class="t" style="left:214.6px;top:164.7px;letter-spacing:-0.39px">Drawable object</div>
<div class="t r" style="right:617.0px;top:164.7px;word-spacing:-1.2px">214 KB</div>
<div class="t" style="left:423.1px;top:164.7px;letter-spacing:-0.4px">Resource [Version: 165];</div>
<div class="t" style="left:559.8px;top:164.7px;">No</div>
<svg class="ic" style="left:5.5px;top:181.0px" width="16" height="16"><use href="#ydr"/></svg>
<div class="t" style="left:21.8px;top:183.0px;letter-spacing:-0.33px">prop_rub_scrap_06.ydr</div>
<div class="t" style="left:214.6px;top:183.0px;letter-spacing:-0.39px">Drawable object</div>
<div class="t r" style="right:617.0px;top:183.0px;word-spacing:-1.2px">142 KB</div>
<div class="t" style="left:423.1px;top:183.0px;letter-spacing:-0.4px">Resource [Version: 165];</div>
<div class="t" style="left:559.8px;top:183.0px;">No</div>
<svg class="ic" style="left:5.5px;top:199.3px" width="16" height="16"><use href="#ydr"/></svg>
<div class="t" style="left:21.8px;top:201.3px;letter-spacing:-0.33px">prop_rub_scrap_07.ydr</div>
<div class="t" style="left:214.6px;top:201.3px;letter-spacing:-0.39px">Drawable object</div>
<div class="t r" style="right:617.0px;top:201.3px;word-spacing:-1.2px">145 KB</div>
<div class="t" style="left:423.1px;top:201.3px;letter-spacing:-0.4px">Resource [Version: 165];</div>
<div class="t" style="left:559.8px;top:201.3px;">No</div>
<svg class="ic" style="left:5.5px;top:217.7px" width="16" height="16"><use href="#ydr"/></svg>
<div class="t" style="left:21.8px;top:219.7px;letter-spacing:-0.33px">prop_rub_stool.ydr</div>
<div class="t" style="left:214.6px;top:219.7px;letter-spacing:-0.39px">Drawable object</div>
<div class="t r" style="right:617.0px;top:219.7px;word-spacing:-1.2px">48 KB</div>
<div class="t" style="left:423.1px;top:219.7px;letter-spacing:-0.4px">Resource [Version: 165];</div>
<div class="t" style="left:559.8px;top:219.7px;">No</div>
<svg class="ic" style="left:5.5px;top:236.0px" width="16" height="16"><use href="#ydr"/></svg>
<div class="t" style="left:21.8px;top:238.0px;letter-spacing:-0.33px">prop_rub_sunktyre.ydr</div>
<div class="t" style="left:214.6px;top:238.0px;letter-spacing:-0.39px">Drawable object</div>
<div class="t r" style="right:617.0px;top:238.0px;word-spacing:-1.2px">102 KB</div>
<div class="t" style="left:423.1px;top:238.0px;letter-spacing:-0.4px">Resource [Version: 165];</div>
<div class="t" style="left:559.8px;top:238.0px;">No</div>
<svg class="ic" style="left:5.5px;top:254.3px" width="16" height="16"><use href="#ydr"/></svg>
<div class="t" style="left:21.8px;top:256.3px;letter-spacing:-0.33px">prop_rub_t34.ydr</div>
<div class="t" style="left:214.6px;top:256.3px;letter-spacing:-0.39px">Drawable object</div>
<div class="t r" style="right:617.0px;top:256.3px;word-spacing:-1.2px">321 KB</div>
<div class="t" style="left:423.1px;top:256.3px;letter-spacing:-0.4px">Resource [Version: 165];</div>
<div class="t" style="left:559.8px;top:256.3px;">No</div>
<svg class="ic" style="left:5.5px;top:272.6px" width="16" height="16"><use href="#ydr"/></svg>
<div class="t" style="left:21.8px;top:274.6px;letter-spacing:-0.33px">prop_rub_trainers_01.ydr</div>
<div class="t" style="left:214.6px;top:274.6px;letter-spacing:-0.39px">Drawable object</div>
<div class="t r" style="right:617.0px;top:274.6px;word-spacing:-1.2px">10 KB</div>
<div class="t" style="left:423.1px;top:274.6px;letter-spacing:-0.4px">Resource [Version: 165];</div>
<div class="t" style="left:559.8px;top:274.6px;">No</div>
<svg class="ic" style="left:5.5px;top:291.0px" width="16" height="16"><use href="#ydr"/></svg>
<div class="t" style="left:21.8px;top:293.0px;letter-spacing:-0.33px">prop_rub_trainers_01b.ydr</div>
<div class="t" style="left:214.6px;top:293.0px;letter-spacing:-0.39px">Drawable object</div>
<div class="t r" style="right:617.0px;top:293.0px;word-spacing:-1.2px">10 KB</div>
<div class="t" style="left:423.1px;top:293.0px;letter-spacing:-0.4px">Resource [Version: 165];</div>
<div class="t" style="left:559.8px;top:293.0px;">No</div>
<svg class="ic" style="left:5.5px;top:309.3px" width="16" height="16"><use href="#ydr"/></svg>
<div class="t" style="left:21.8px;top:311.3px;letter-spacing:-0.33px">prop_rub_trainers_01c.ydr</div>
<div class="t" style="left:214.6px;top:311.3px;letter-spacing:-0.39px">Drawable object</div>
<div class="t r" style="right:617.0px;top:311.3px;word-spacing:-1.2px">10 KB</div>
<div class="t" style="left:423.1px;top:311.3px;letter-spacing:-0.4px">Resource [Version: 165];</div>
<div class="t" style="left:559.8px;top:311.3px;">No</div>
<svg class="ic" style="left:5.5px;top:327.6px" width="16" height="16"><use href="#ydr"/></svg>
<div class="t" style="left:21.8px;top:329.6px;letter-spacing:-0.33px">prop_rub_trolley01a.ydr</div>
<div class="t" style="left:214.6px;top:329.6px;letter-spacing:-0.39px">Drawable object</div>
<div class="t r" style="right:617.0px;top:329.6px;word-spacing:-1.2px">71 KB</div>
<div class="t" style="left:423.1px;top:329.6px;letter-spacing:-0.4px">Resource [Version: 165];</div>
<div class="t" style="left:559.8px;top:329.6px;">No</div>
<svg class="ic" style="left:5.5px;top:346.0px" width="16" height="16"><use href="#ydr"/></svg>
<div class="t" style="left:21.8px;top:348.0px;letter-spacing:-0.33px">prop_rub_trolley02a.ydr</div>
<div class="t" style="left:214.6px;top:348.0px;letter-spacing:-0.39px">Drawable object</div>
<div class="t r" style="right:617.0px;top:348.0px;word-spacing:-1.2px">77 KB</div>
<div class="t" style="left:423.1px;top:348.0px;letter-spacing:-0.4px">Resource [Version: 165];</div>
<div class="t" style="left:559.8px;top:348.0px;">No</div>
<svg class="ic" style="left:5.5px;top:364.3px" width="16" height="16"><use href="#ydr"/></svg>
<div class="t" style="left:21.8px;top:366.3px;letter-spacing:-0.33px">prop_rub_trolley03a.ydr</div>
<div class="t" style="left:214.6px;top:366.3px;letter-spacing:-0.39px">Drawable object</div>
<div class="t r" style="right:617.0px;top:366.3px;word-spacing:-1.2px">145 KB</div>
<div class="t" style="left:423.1px;top:366.3px;letter-spacing:-0.4px">Resource [Version: 165];</div>
<div class="t" style="left:559.8px;top:366.3px;">No</div>
<svg class="ic" style="left:5.5px;top:382.6px" width="16" height="16"><use href="#ydr"/></svg>
<div class="t" style="left:21.8px;top:384.6px;letter-spacing:-0.33px">prop_rub_trukwreck_1.ydr</div>
<div class="t" style="left:214.6px;top:384.6px;letter-spacing:-0.39px">Drawable object</div>
<div class="t r" style="right:617.0px;top:384.6px;word-spacing:-1.2px">319 KB</div>
<div class="t" style="left:423.1px;top:384.6px;letter-spacing:-0.4px">Resource [Version: 165];</div>
<div class="t" style="left:559.8px;top:384.6px;">No</div>
<svg class="ic" style="left:5.5px;top:401.0px" width="16" height="16"><use href="#ydr"/></svg>
<div class="t" style="left:21.8px;top:403.0px;letter-spacing:-0.33px">prop_rub_trukwreck_2.ydr</div>
<div class="t" style="left:214.6px;top:403.0px;letter-spacing:-0.39px">Drawable object</div>
<div class="t r" style="right:617.0px;top:403.0px;word-spacing:-1.2px">233 KB</div>
<div class="t" style="left:423.1px;top:403.0px;letter-spacing:-0.4px">Resource [Version: 165];</div>
<div class="t" style="left:559.8px;top:403.0px;">No</div>
<svg class="ic" style="left:5.5px;top:419.3px" width="16" height="16"><use href="#ydr"/></svg>
<div class="t" style="left:21.8px;top:421.3px;letter-spacing:-0.33px">prop_rub_tyre_01.ydr</div>
<div class="t" style="left:214.6px;top:421.3px;letter-spacing:-0.39px">Drawable object</div>
<div class="t r" style="right:617.0px;top:421.3px;word-spacing:-1.2px">103 KB</div>
<div class="t" style="left:423.1px;top:421.3px;letter-spacing:-0.4px">Resource [Version: 165];</div>
<div class="t" style="left:559.8px;top:421.3px;">No</div>
<svg class="ic" style="left:5.5px;top:437.6px" width="16" height="16"><use href="#ydr"/></svg>
<div class="t" style="left:21.8px;top:439.6px;letter-spacing:-0.33px">prop_rub_tyre_02.ydr</div>
<div class="t" style="left:214.6px;top:439.6px;letter-spacing:-0.39px">Drawable object</div>
<div class="t r" style="right:617.0px;top:439.6px;word-spacing:-1.2px">125 KB</div>
<div class="t" style="left:423.1px;top:439.6px;letter-spacing:-0.4px">Resource [Version: 165];</div>
<div class="t" style="left:559.8px;top:439.6px;">No</div>
<svg class="ic" style="left:5.5px;top:455.9px" width="16" height="16"><use href="#ydr"/></svg>
<div class="t" style="left:21.8px;top:457.9px;letter-spacing:-0.33px">prop_rub_tyre_03.ydr</div>
<div class="t" style="left:214.6px;top:457.9px;letter-spacing:-0.39px">Drawable object</div>
<div class="t r" style="right:617.0px;top:457.9px;word-spacing:-1.2px">107 KB</div>
<div class="t" style="left:423.1px;top:457.9px;letter-spacing:-0.4px">Resource [Version: 165];</div>
<div class="t" style="left:559.8px;top:457.9px;">No</div>
<svg class="ic" style="left:5.5px;top:474.3px" width="16" height="16"><use href="#ydr"/></svg>
<div class="t" style="left:21.8px;top:476.3px;letter-spacing:-0.33px">prop_rub_tyre_dam1.ydr</div>
<div class="t" style="left:214.6px;top:476.3px;letter-spacing:-0.39px">Drawable object</div>
<div class="t r" style="right:617.0px;top:476.3px;word-spacing:-1.2px">42 KB</div>
<div class="t" style="left:423.1px;top:476.3px;letter-spacing:-0.4px">Resource [Version: 165];</div>
<div class="t" style="left:559.8px;top:476.3px;">No</div>
<svg class="ic" style="left:5.5px;top:492.6px" width="16" height="16"><use href="#ydr"/></svg>
<div class="t" style="left:21.8px;top:494.6px;letter-spacing:-0.33px">prop_rub_tyre_dam2.ydr</div>
<div class="t" style="left:214.6px;top:494.6px;letter-spacing:-0.39px">Drawable object</div>
<div class="t r" style="right:617.0px;top:494.6px;word-spacing:-1.2px">41 KB</div>
<div class="t" style="left:423.1px;top:494.6px;letter-spacing:-0.4px">Resource [Version: 165];</div>
<div class="t" style="left:559.8px;top:494.6px;">No</div>
<svg class="ic" style="left:5.5px;top:510.9px" width="16" height="16"><use href="#ydr"/></svg>
<div class="t" style="left:21.8px;top:512.9px;letter-spacing:-0.33px">prop_rub_tyre_dam3.ydr</div>
<div class="t" style="left:214.6px;top:512.9px;letter-spacing:-0.39px">Drawable object</div>
<div class="t r" style="right:617.0px;top:512.9px;word-spacing:-1.2px">40 KB</div>
<div class="t" style="left:423.1px;top:512.9px;letter-spacing:-0.4px">Resource [Version: 165];</div>
<div class="t" style="left:559.8px;top:512.9px;">No</div>
<svg class="ic" style="left:5.5px;top:529.3px" width="16" height="16"><use href="#ydr"/></svg>
<div class="t" style="left:21.8px;top:531.3px;letter-spacing:-0.33px">prop_rub_washer_01.ydr</div>
<div class="t" style="left:214.6px;top:531.3px;letter-spacing:-0.39px">Drawable object</div>
<div class="t r" style="right:617.0px;top:531.3px;word-spacing:-1.2px">91 KB</div>
<div class="t" style="left:423.1px;top:531.3px;letter-spacing:-0.4px">Resource [Version: 165];</div>
<div class="t" style="left:559.8px;top:531.3px;">No</div>
<svg class="ic" style="left:5.5px;top:547.6px" width="16" height="16"><use href="#ydr"/></svg>
<div class="t" style="left:21.8px;top:549.6px;letter-spacing:-0.33px">prop_rub_wheel_01.ydr</div>
<div class="t" style="left:214.6px;top:549.6px;letter-spacing:-0.39px">Drawable object</div>
<div class="t r" style="right:617.0px;top:549.6px;word-spacing:-1.2px">115 KB</div>
<div class="t" style="left:423.1px;top:549.6px;letter-spacing:-0.4px">Resource [Version: 165];</div>
<div class="t" style="left:559.8px;top:549.6px;">No</div>
<svg class="ic" style="left:5.5px;top:565.9px" width="16" height="16"><use href="#ydr"/></svg>
<div class="t" style="left:21.8px;top:567.9px;letter-spacing:-0.33px">prop_rub_wheel_02.ydr</div>
<div class="t" style="left:214.6px;top:567.9px;letter-spacing:-0.39px">Drawable object</div>
<div class="t r" style="right:617.0px;top:567.9px;word-spacing:-1.2px">110 KB</div>
<div class="t" style="left:423.1px;top:567.9px;letter-spacing:-0.4px">Resource [Version: 165];</div>
<div class="t" style="left:559.8px;top:567.9px;">No</div>
<svg class="ic" style="left:5.5px;top:584.3px" width="16" height="16"><use href="#ydr"/></svg>
<div class="t" style="left:21.8px;top:586.3px;letter-spacing:-0.33px">prop_rub_wreckage_3.ydr</div>
<div class="t" style="left:214.6px;top:586.3px;letter-spacing:-0.39px">Drawable object</div>
<div class="t r" style="right:617.0px;top:586.3px;word-spacing:-1.2px">223 KB</div>
<div class="t" style="left:423.1px;top:586.3px;letter-spacing:-0.4px">Resource [Version: 165];</div>
<div class="t" style="left:559.8px;top:586.3px;">No</div>
<svg class="ic" style="left:5.5px;top:602.6px" width="16" height="16"><use href="#ydr"/></svg>
<div class="t" style="left:21.8px;top:604.6px;letter-spacing:-0.33px">prop_rub_wreckage_4.ydr</div>
<div class="t" style="left:214.6px;top:604.6px;letter-spacing:-0.39px">Drawable object</div>
<div class="t r" style="right:617.0px;top:604.6px;word-spacing:-1.2px">173 KB</div>
<div class="t" style="left:423.1px;top:604.6px;letter-spacing:-0.4px">Resource [Version: 165];</div>
<div class="t" style="left:559.8px;top:604.6px;">No</div>
<svg class="ic" style="left:5.5px;top:620.9px" width="16" height="16"><use href="#ydr"/></svg>
<div class="t" style="left:21.8px;top:622.9px;letter-spacing:-0.33px">prop_rub_wreckage_5.ydr</div>
<div class="t" style="left:214.6px;top:622.9px;letter-spacing:-0.39px">Drawable object</div>
<div class="t r" style="right:617.0px;top:622.9px;word-spacing:-1.2px">143 KB</div>
<div class="t" style="left:423.1px;top:622.9px;letter-spacing:-0.4px">Resource [Version: 165];</div>
<div class="t" style="left:559.8px;top:622.9px;">No</div>
<svg class="ic" style="left:5.5px;top:639.2px" width="16" height="16"><use href="#ydr"/></svg>
<div class="t" style="left:21.8px;top:641.2px;letter-spacing:-0.33px">prop_rub_wreckage_6.ydr</div>
<div class="t" style="left:214.6px;top:641.2px;letter-spacing:-0.39px">Drawable object</div>
<div class="t r" style="right:617.0px;top:641.2px;word-spacing:-1.2px">155 KB</div>
<div class="t" style="left:423.1px;top:641.2px;letter-spacing:-0.4px">Resource [Version: 165];</div>
<div class="t" style="left:559.8px;top:641.2px;">No</div>
<svg class="ic" style="left:5.5px;top:657.6px" width="16" height="16"><use href="#ydr"/></svg>
<div class="t" style="left:21.8px;top:659.6px;letter-spacing:-0.33px">prop_rub_wreckage_7.ydr</div>
<div class="t" style="left:214.6px;top:659.6px;letter-spacing:-0.39px">Drawable object</div>
<div class="t r" style="right:617.0px;top:659.6px;word-spacing:-1.2px">119 KB</div>
<div class="t" style="left:423.1px;top:659.6px;letter-spacing:-0.4px">Resource [Version: 165];</div>
<div class="t" style="left:559.8px;top:659.6px;">No</div>
<svg class="ic" style="left:5.5px;top:675.9px" width="16" height="16"><use href="#ydr"/></svg>
<div class="t" style="left:21.8px;top:677.9px;letter-spacing:-0.33px">prop_rub_wreckage_8.ydr</div>
<div class="t" style="left:214.6px;top:677.9px;letter-spacing:-0.39px">Drawable object</div>
<div class="t r" style="right:617.0px;top:677.9px;word-spacing:-1.2px">141 KB</div>
<div class="t" style="left:423.1px;top:677.9px;letter-spacing:-0.4px">Resource [Version: 165];</div>
<div class="t" style="left:559.8px;top:677.9px;">No</div>
<svg class="ic" style="left:5.5px;top:694.2px" width="16" height="16"><use href="#ydr"/></svg>
<div class="t" style="left:21.8px;top:696.2px;letter-spacing:-0.33px">prop_rub_wreckage_9.ydr</div>
<div class="t" style="left:214.6px;top:696.2px;letter-spacing:-0.39px">Drawable object</div>
<div class="t r" style="right:617.0px;top:696.2px;word-spacing:-1.2px">213 KB</div>
<div class="t" style="left:423.1px;top:696.2px;letter-spacing:-0.4px">Resource [Version: 165];</div>
<div class="t" style="left:559.8px;top:696.2px;">No</div>
<svg class="ic" style="left:5.5px;top:712.6px" width="16" height="16"><use href="#ydr"/></svg>
<div class="t" style="left:21.8px;top:714.6px;letter-spacing:-0.33px">prop_skid_chair_01.ydr</div>
<div class="t" style="left:214.6px;top:714.6px;letter-spacing:-0.39px">Drawable object</div>
<div class="t r" style="right:617.0px;top:714.6px;word-spacing:-1.2px">49 KB</div>
<div class="t" style="left:423.1px;top:714.6px;letter-spacing:-0.4px">Resource [Version: 165];</div>
<div class="t" style="left:559.8px;top:714.6px;">No</div>
<svg class="ic" style="left:5.5px;top:730.9px" width="16" height="16"><use href="#ydr"/></svg>
<div class="t" style="left:21.8px;top:732.9px;letter-spacing:-0.33px">prop_skid_chair_02.ydr</div>
<div class="t" style="left:214.6px;top:732.9px;letter-spacing:-0.39px">Drawable object</div>
<div class="t r" style="right:617.0px;top:732.9px;word-spacing:-1.2px">50 KB</div>
<div class="t" style="left:423.1px;top:732.9px;letter-spacing:-0.4px">Resource [Version: 165];</div>
<div class="t" style="left:559.8px;top:732.9px;">No</div>
<svg class="ic" style="left:5.5px;top:749.2px" width="16" height="16"><use href="#ydr"/></svg>
<div class="t" style="left:21.8px;top:751.2px;letter-spacing:-0.33px">prop_skid_chair_03.ydr</div>
<div class="t" style="left:214.6px;top:751.2px;letter-spacing:-0.39px">Drawable object</div>
<div class="t r" style="right:617.0px;top:751.2px;word-spacing:-1.2px">51 KB</div>
<div class="t" style="left:423.1px;top:751.2px;letter-spacing:-0.4px">Resource [Version: 165];</div>
<div class="t" style="left:559.8px;top:751.2px;">No</div>
<svg class="ic" style="left:5.5px;top:767.6px" width="16" height="16"><use href="#ydr"/></svg>
<div class="t" style="left:21.8px;top:769.6px;letter-spacing:-0.33px">prop_skid_sleepbag_1.ydr</div>
<div class="t" style="left:214.6px;top:769.6px;letter-spacing:-0.39px">Drawable object</div>
<div class="t r" style="right:617.0px;top:769.6px;word-spacing:-1.2px">52 KB</div>
<div class="t" style="left:423.1px;top:769.6px;letter-spacing:-0.4px">Resource [Version: 165];</div>
<div class="t" style="left:559.8px;top:769.6px;">No</div>
<svg class="ic" style="left:5.5px;top:785.9px" width="16" height="16"><use href="#ydr"/></svg>
<div class="t" style="left:21.8px;top:787.9px;letter-spacing:-0.33px">prop_still.ydr</div>
<div class="t" style="left:214.6px;top:787.9px;letter-spacing:-0.39px">Drawable object</div>
<div class="t r" style="right:617.0px;top:787.9px;word-spacing:-1.2px">53 KB</div>
<div class="t" style="left:423.1px;top:787.9px;letter-spacing:-0.4px">Resource [Version: 165];</div>
<div class="t" style="left:559.8px;top:787.9px;">No</div>
<div class="t" style="left:12.3px;top:810.2px;color:#2e3ea6;font-size:13px;letter-spacing:-0.46px">Fragment object (71)</div>
<div class="ln" style="left:128.5px;top:816.0px;width:1000px;height:1px;background:#b3bfe8"></div>
<svg class="ic" style="left:5.5px;top:828.1px" width="16" height="16"><use href="#yft"/></svg>
<div class="t" style="left:21.8px;top:830.1px;letter-spacing:-0.33px">prop_hobo_seat_01.yft</div>
<div class="t" style="left:214.6px;top:830.1px;letter-spacing:-0.39px">Fragment object</div>
<div class="t r" style="right:617.0px;top:830.1px;word-spacing:-1.2px">60 KB</div>
<div class="t" style="left:423.1px;top:830.1px;letter-spacing:-0.4px">Resource [Version: 162];</div>
<div class="t" style="left:559.8px;top:830.1px;">No</div>
<svg class="ic" style="left:5.5px;top:846.4px" width="16" height="16"><use href="#yft"/></svg>
<div class="t" style="left:21.8px;top:848.4px;letter-spacing:-0.33px">prop_homeles_shelter_01.yft</div>
<div class="t" style="left:214.6px;top:848.4px;letter-spacing:-0.39px">Fragment object</div>
<div class="t r" style="right:617.0px;top:848.4px;word-spacing:-1.2px">60 KB</div>
<div class="t" style="left:423.1px;top:848.4px;letter-spacing:-0.4px">Resource [Version: 162];</div>
<div class="t" style="left:559.8px;top:848.4px;">No</div>
<svg class="ic" style="left:5.5px;top:864.8px" width="16" height="16"><use href="#yft"/></svg>
<div class="t" style="left:21.8px;top:866.8px;letter-spacing:-0.33px">prop_homeles_shelter_02.yft</div>
<div class="t" style="left:214.6px;top:866.8px;letter-spacing:-0.39px">Fragment object</div>
<div class="t r" style="right:617.0px;top:866.8px;word-spacing:-1.2px">60 KB</div>
<div class="t" style="left:423.1px;top:866.8px;letter-spacing:-0.4px">Resource [Version: 162];</div>
<div class="t" style="left:559.8px;top:866.8px;">No</div>
<svg class="ic" style="left:5.5px;top:883.1px" width="16" height="16"><use href="#yft"/></svg>
<div class="t" style="left:21.8px;top:885.1px;letter-spacing:-0.33px">prop_pizza_box_03.yft</div>
<div class="t" style="left:214.6px;top:885.1px;letter-spacing:-0.39px">Fragment object</div>
<div class="t r" style="right:617.0px;top:885.1px;word-spacing:-1.2px">60 KB</div>
<div class="t" style="left:423.1px;top:885.1px;letter-spacing:-0.4px">Resource [Version: 162];</div>
<div class="t" style="left:559.8px;top:885.1px;">No</div>
<svg class="ic" style="left:5.5px;top:901.4px" width="16" height="16"><use href="#yft"/></svg>
<div class="t" style="left:21.8px;top:903.4px;letter-spacing:-0.33px">prop_rub_binbag_01.yft</div>
<div class="t" style="left:214.6px;top:903.4px;letter-spacing:-0.39px">Fragment object</div>
<div class="t r" style="right:617.0px;top:903.4px;word-spacing:-1.2px">60 KB</div>
<div class="t" style="left:423.1px;top:903.4px;letter-spacing:-0.4px">Resource [Version: 162];</div>
<div class="t" style="left:559.8px;top:903.4px;">No</div>
<svg class="ic" style="left:5.5px;top:919.8px" width="16" height="16"><use href="#yft"/></svg>
<div class="t" style="left:21.8px;top:921.8px;letter-spacing:-0.33px">prop_rub_binbag_01b.yft</div>
<div class="t" style="left:214.6px;top:921.8px;letter-spacing:-0.39px">Fragment object</div>
<div class="t r" style="right:617.0px;top:921.8px;word-spacing:-1.2px">60 KB</div>
<div class="t" style="left:423.1px;top:921.8px;letter-spacing:-0.4px">Resource [Version: 162];</div>
<div class="t" style="left:559.8px;top:921.8px;">No</div>
<svg class="ic" style="left:5.5px;top:938.1px" width="16" height="16"><use href="#yft"/></svg>
<div class="t" style="left:21.8px;top:940.1px;letter-spacing:-0.33px">prop_rub_binbag_03.yft</div>
<div class="t" style="left:214.6px;top:940.1px;letter-spacing:-0.39px">Fragment object</div>
<div class="t r" style="right:617.0px;top:940.1px;word-spacing:-1.2px">60 KB</div>
<div class="t" style="left:423.1px;top:940.1px;letter-spacing:-0.4px">Resource [Version: 162];</div>
<div class="t" style="left:559.8px;top:940.1px;">No</div>
<svg class="ic" style="left:5.5px;top:956.4px" width="16" height="16"><use href="#yft"/></svg>
<div class="t" style="left:21.8px;top:958.4px;letter-spacing:-0.33px">prop_rub_binbag_03b.yft</div>
<div class="t" style="left:214.6px;top:958.4px;letter-spacing:-0.39px">Fragment object</div>
<div class="t r" style="right:617.0px;top:958.4px;word-spacing:-1.2px">60 KB</div>
<div class="t" style="left:423.1px;top:958.4px;letter-spacing:-0.4px">Resource [Version: 162];</div>
<div class="t" style="left:559.8px;top:958.4px;">No</div>
<svg class="ic" style="left:5.5px;top:974.7px" width="16" height="16"><use href="#yft"/></svg>
<div class="t" style="left:21.8px;top:976.7px;letter-spacing:-0.33px">prop_rub_binbag_04.yft</div>
<div class="t" style="left:214.6px;top:976.7px;letter-spacing:-0.39px">Fragment object</div>
<div class="t r" style="right:617.0px;top:976.7px;word-spacing:-1.2px">60 KB</div>
<div class="t" style="left:423.1px;top:976.7px;letter-spacing:-0.4px">Resource [Version: 162];</div>
<div class="t" style="left:559.8px;top:976.7px;">No</div>
<svg class="ic" style="left:5.5px;top:993.1px" width="16" height="16"><use href="#yft"/></svg>
<div class="t" style="left:21.8px;top:995.1px;letter-spacing:-0.33px">prop_rub_binbag_05.yft</div>
<div class="t" style="left:214.6px;top:995.1px;letter-spacing:-0.39px">Fragment object</div>
<div class="t r" style="right:617.0px;top:995.1px;word-spacing:-1.2px">86 KB</div>
<div class="t" style="left:423.1px;top:995.1px;letter-spacing:-0.4px">Resource [Version: 162];</div>
<div class="t" style="left:559.8px;top:995.1px;">No</div>
<svg class="ic" style="left:5.5px;top:1011.4px" width="16" height="16"><use href="#yft"/></svg>
<div class="t" style="left:21.8px;top:1013.4px;letter-spacing:-0.33px">prop_rub_binbag_06.yft</div>
<div class="t" style="left:214.6px;top:1013.4px;letter-spacing:-0.39px">Fragment object</div>
<div class="t r" style="right:617.0px;top:1013.4px;word-spacing:-1.2px">151 KB</div>
<div class="t" style="left:423.1px;top:1013.4px;letter-spacing:-0.4px">Resource [Version: 162];</div>
<div class="t" style="left:559.8px;top:1013.4px;">No</div>
<svg class="ic" style="left:5.5px;top:1029.7px" width="16" height="16"><use href="#yft"/></svg>
<div class="t" style="left:21.8px;top:1031.7px;letter-spacing:-0.33px">prop_rub_binbag_08.yft</div>
<div class="t" style="left:214.6px;top:1031.7px;letter-spacing:-0.39px">Fragment object</div>
<div class="t r" style="right:617.0px;top:1031.7px;word-spacing:-1.2px">94 KB</div>
<div class="t" style="left:423.1px;top:1031.7px;letter-spacing:-0.4px">Resource [Version: 162];</div>
<div class="t" style="left:559.8px;top:1031.7px;">No</div>
<svg class="ic" style="left:5.5px;top:1048.1px" width="16" height="16"><use href="#yft"/></svg>
<div class="t" style="left:21.8px;top:1050.1px;letter-spacing:-0.33px">prop_rub_boxpile_01.yft</div>
<div class="t" style="left:214.6px;top:1050.1px;letter-spacing:-0.39px">Fragment object</div>
<div class="t r" style="right:617.0px;top:1050.1px;word-spacing:-1.2px">51 KB</div>
<div class="t" style="left:423.1px;top:1050.1px;letter-spacing:-0.4px">Resource [Version: 162];</div>
<div class="t" style="left:559.8px;top:1050.1px;">No</div>
<svg class="ic" style="left:5.5px;top:1066.4px" width="16" height="16"><use href="#yft"/></svg>
<div class="t" style="left:21.8px;top:1068.4px;letter-spacing:-0.33px">prop_rub_boxpile_02.yft</div>
<div class="t" style="left:214.6px;top:1068.4px;letter-spacing:-0.39px">Fragment object</div>
<div class="t r" style="right:617.0px;top:1068.4px;word-spacing:-1.2px">45 KB</div>
<div class="t" style="left:423.1px;top:1068.4px;letter-spacing:-0.4px">Resource [Version: 162];</div>
<div class="t" style="left:559.8px;top:1068.4px;">No</div>
<svg class="ic" style="left:5.5px;top:1084.7px" width="16" height="16"><use href="#yft"/></svg>
<div class="t" style="left:21.8px;top:1086.7px;letter-spacing:-0.33px">prop_rub_boxpile_03.yft</div>
<div class="t" style="left:214.6px;top:1086.7px;letter-spacing:-0.39px">Fragment object</div>
<div class="t r" style="right:617.0px;top:1086.7px;word-spacing:-1.2px">42 KB</div>
<div class="t" style="left:423.1px;top:1086.7px;letter-spacing:-0.4px">Resource [Version: 162];</div>
<div class="t" style="left:559.8px;top:1086.7px;">No</div>
<svg class="ic" style="left:5.5px;top:1103.0px" width="16" height="16"><use href="#yft"/></svg>
<div class="t" style="left:21.8px;top:1105.0px;letter-spacing:-0.33px">prop_rub_boxpile_04.yft</div>
<div class="t" style="left:214.6px;top:1105.0px;letter-spacing:-0.39px">Fragment object</div>
<div class="t r" style="right:617.0px;top:1105.0px;word-spacing:-1.2px">51 KB</div>
<div class="t" style="left:423.1px;top:1105.0px;letter-spacing:-0.4px">Resource [Version: 162];</div>
<div class="t" style="left:559.8px;top:1105.0px;">No</div>
<svg class="ic" style="left:5.5px;top:1121.4px" width="16" height="16"><use href="#yft"/></svg>
<div class="t" style="left:21.8px;top:1123.4px;letter-spacing:-0.33px">prop_rub_boxpile_04b.yft</div>
<div class="t" style="left:214.6px;top:1123.4px;letter-spacing:-0.39px">Fragment object</div>
<div class="t r" style="right:617.0px;top:1123.4px;word-spacing:-1.2px">51 KB</div>
<div class="t" style="left:423.1px;top:1123.4px;letter-spacing:-0.4px">Resource [Version: 162];</div>
<div class="t" style="left:559.8px;top:1123.4px;">No</div>
<svg class="ic" style="left:5.5px;top:1139.7px" width="16" height="16"><use href="#yft"/></svg>
<div class="t" style="left:21.8px;top:1141.7px;letter-spacing:-0.33px">prop_rub_boxpile_05.yft</div>
<div class="t" style="left:214.6px;top:1141.7px;letter-spacing:-0.39px">Fragment object</div>
<div class="t r" style="right:617.0px;top:1141.7px;word-spacing:-1.2px">125 KB</div>
<div class="t" style="left:423.1px;top:1141.7px;letter-spacing:-0.4px">Resource [Version: 162];</div>
<div class="t" style="left:559.8px;top:1141.7px;">No</div>
<svg class="ic" style="left:5.5px;top:1158.0px" width="16" height="16"><use href="#yft"/></svg>
<div class="t" style="left:21.8px;top:1160.0px;letter-spacing:-0.33px">prop_rub_boxpile_06.yft</div>
<div class="t" style="left:214.6px;top:1160.0px;letter-spacing:-0.39px">Fragment object</div>
<div class="t r" style="right:617.0px;top:1160.0px;word-spacing:-1.2px">136 KB</div>
<div class="t" style="left:423.1px;top:1160.0px;letter-spacing:-0.4px">Resource [Version: 162];</div>
<div class="t" style="left:559.8px;top:1160.0px;">No</div>
<svg class="ic" style="left:5.5px;top:1176.4px" width="16" height="16"><use href="#yft"/></svg>
<div class="t" style="left:21.8px;top:1178.4px;letter-spacing:-0.33px">prop_rub_boxpile_07.yft</div>
<div class="t" style="left:214.6px;top:1178.4px;letter-spacing:-0.39px">Fragment object</div>
<div class="t r" style="right:617.0px;top:1178.4px;word-spacing:-1.2px">120 KB</div>
<div class="t" style="left:423.1px;top:1178.4px;letter-spacing:-0.4px">Resource [Version: 162];</div>
<div class="t" style="left:559.8px;top:1178.4px;">No</div>
<svg class="ic" style="left:5.5px;top:1194.7px" width="16" height="16"><use href="#yft"/></svg>
<div class="t" style="left:21.8px;top:1196.7px;letter-spacing:-0.33px">prop_rub_boxpile_08.yft</div>
<div class="t" style="left:214.6px;top:1196.7px;letter-spacing:-0.39px">Fragment object</div>
<div class="t r" style="right:617.0px;top:1196.7px;word-spacing:-1.2px">37 KB</div>
<div class="t" style="left:423.1px;top:1196.7px;letter-spacing:-0.4px">Resource [Version: 162];</div>
<div class="t" style="left:559.8px;top:1196.7px;">No</div>
<svg class="ic" style="left:5.5px;top:1213.0px" width="16" height="16"><use href="#yft"/></svg>
<div class="t" style="left:21.8px;top:1215.0px;letter-spacing:-0.33px">prop_rub_boxpile_09.yft</div>
<div class="t" style="left:214.6px;top:1215.0px;letter-spacing:-0.39px">Fragment object</div>
<div class="t r" style="right:617.0px;top:1215.0px;word-spacing:-1.2px">129 KB</div>
<div class="t" style="left:423.1px;top:1215.0px;letter-spacing:-0.4px">Resource [Version: 162];</div>
<div class="t" style="left:559.8px;top:1215.0px;">No</div>
<svg class="ic" style="left:5.5px;top:1231.4px" width="16" height="16"><use href="#yft"/></svg>
<div class="t" style="left:21.8px;top:1233.4px;letter-spacing:-0.33px">prop_rub_boxpile_10.yft</div>
<div class="t" style="left:214.6px;top:1233.4px;letter-spacing:-0.39px">Fragment object</div>
<div class="t r" style="right:617.0px;top:1233.4px;word-spacing:-1.2px">120 KB</div>
<div class="t" style="left:423.1px;top:1233.4px;letter-spacing:-0.4px">Resource [Version: 162];</div>
<div class="t" style="left:559.8px;top:1233.4px;">No</div>
<svg class="ic" style="left:5.5px;top:1249.7px" width="16" height="16"><use href="#yft"/></svg>
<div class="t" style="left:21.8px;top:1251.7px;letter-spacing:-0.33px">prop_rub_cage01b.yft</div>
<div class="t" style="left:214.6px;top:1251.7px;letter-spacing:-0.39px">Fragment object</div>
<div class="t r" style="right:617.0px;top:1251.7px;word-spacing:-1.2px">152 KB</div>
<div class="t" style="left:423.1px;top:1251.7px;letter-spacing:-0.4px">Resource [Version: 162];</div>
<div class="t" style="left:559.8px;top:1251.7px;">No</div>
</div>
<div class="ln" style="left:925px;top:885px;width:247px;height:241px;background:#f7f7f7;border:1px solid #a8a8a8;box-shadow:2px 2px 2px rgba(0,0,0,0.35)"></div>
<div class="ln" style="left:928px;top:1006px;width:241px;height:22px;background:#99ccf7"></div>
<div class="t" style="left:956.0px;top:891.7px;letter-spacing:0px">Open</div>
<div class="t" style="left:956.0px;top:914.3px;letter-spacing:0px">View in Hex...</div>
<div class="t r" style="right:533.5px;top:914.3px;letter-spacing:-0.2px">Ctrl+H</div>
<div class="t" style="left:956.0px;top:936.5px;letter-spacing:0px">View as text...</div>
<div class="t r" style="right:533.5px;top:936.5px;letter-spacing:-0.2px">Ctrl+T</div>
<div class="t" style="left:956.0px;top:965.4px;letter-spacing:0px">Extract...</div>
<div class="t r" style="right:533.5px;top:965.4px;letter-spacing:-0.2px">Ctrl+E</div>
<div class="t" style="left:956.0px;top:987.5px;letter-spacing:0px">Export to openFormats (.odr)</div>
<div class="t r" style="right:533.5px;top:987.5px;letter-spacing:-0.2px">Ctrl+S</div>
<div class="t" style="left:956.0px;top:1010.0px;letter-spacing:0px">Copy name</div>
<div class="t" style="left:956.0px;top:1032.1px;letter-spacing:0px">Add to favorites...</div>
<div class="t" style="left:956.0px;top:1054.3px;letter-spacing:0px">Filter</div>
<div class="t" style="left:956.0px;top:1076.4px;letter-spacing:0px">Tags</div>
<div class="t" style="left:956.0px;top:1105.5px;letter-spacing:0px">Select all</div>
<div class="t r" style="right:533.5px;top:1105.5px;letter-spacing:-0.2px">Ctrl+A</div>
<div class="ln" style="left:957px;top:957px;width:212px;height:1px;background:#d7d7d7"></div>
<div class="ln" style="left:957px;top:1097.5px;width:212px;height:1px;background:#d7d7d7"></div>
<svg class="ic" style="left:1157px;top:1057.3px" width="6" height="9"><path d="M0.5 0.5L4.5 4.2L0.5 8Z" fill="#111"/></svg>
<svg class="ic" style="left:1157px;top:1079.4px" width="6" height="9"><path d="M0.5 0.5L4.5 4.2L0.5 8Z" fill="#111"/></svg>
<svg class="ic" style="left:925px;top:885px" width="30" height="241" viewBox="925 885 30 241">
 <path d="M932.5 891.5H941.5L945 895V906H932.5Z" fill="#fafafa" stroke="#aaa"/>
 <circle cx="937.5" cy="899" r="3.3" fill="#e4eefa" stroke="#8fa3ba"/>
 <path d="M935 901.5L931.5 905.5" stroke="#777" stroke-width="1.2"/>
 <path d="M932.5 913.5H941.5L945 917V929H932.5Z" fill="#fafafa" stroke="#aaa"/>
 <path d="M935 917.3H939M935 919.7H942.6M935 922.1H942.6M935 924.5H942.6M935 926.9H942.6" stroke="#3a7fd5" stroke-width="0.9"/>
 <path d="M933.5 936.5H942.5L946 940V951.5H933.5Z" fill="#fafafa" stroke="#aaa"/>
 <path d="M935.5 941.5H940.5M938 941.5V948" stroke="#bbb" stroke-width="1.2"/><path d="M938.2 941.6H944.8V943.4H942.5V947.8H943.6V948.8H939.5V947.8H940.6V943.4H938.2Z" fill="#2f56c8"/>
 <path d="M932.5 965.5H938.5L940.5 967.5V976.5H932.5Z" fill="#fafafa" stroke="#b5b5b5"/>
 <path d="M935.5 967.5H941.5L943.5 969.5V978.5H935.5Z" fill="#fafafa" stroke="#b5b5b5"/>
 <path d="M938.5 973.5H942.5V971.5L946 974.5L942.5 977.5V975.5H938.5Z" fill="#33b82a"/>
 <rect x="932" y="986.5" width="11.5" height="14" rx="1" fill="#fafafa" stroke="#aaa"/>
 <rect x="933.3" y="988.3" width="2.4" height="2.4" fill="#f7a02a"/>
 <rect x="933.3" y="992.3" width="2.4" height="2.4" fill="#8bc83a"/>
 <rect x="933.3" y="996.3" width="2.4" height="2.4" fill="#22a0e8"/>
 <path d="M937 989.3H941.5" stroke="#aaa"/>
 <path d="M941 992L947.5 997.5H944.5V1002.5H937.5V997.5H934.5Z" fill="#19b01f"/>
 <path d="M932.5 1009.5H938.5L940.5 1011.5V1022H932.5Z" fill="#fafafa" stroke="#b8b8b8"/>
 <path d="M934 1013H938M934 1015H938M934 1017H937" stroke="#7aa0d8" stroke-width="0.8"/>
 <path d="M938.5 1013.5H944.5L946.5 1015.5V1025.5H938.5Z" fill="#fafafa" stroke="#b8b8b8"/>
 <path d="M940 1017.5H945M940 1019.5H945M940 1021.5H945M940 1023.5H945" stroke="#3b78d0" stroke-width="0.8"/>
 <path d="M938.5 1032L940.3 1036.3L944.8 1036.6L941.3 1039.5L942.5 1044L938.5 1041.5L934.5 1044L935.7 1039.5L932.2 1036.6L936.7 1036.3Z" fill="#ffc62a" stroke="#f08a10" stroke-width="0.7"/>
 <circle cx="940" cy="1058" r="3.6" fill="#fbfbfb" stroke="#d5d5d5" stroke-width="1.1"/>
 <path d="M937.5 1061L933.5 1068" stroke="#8a8a8a" stroke-width="1.1"/>
 <path d="M933 1083L939 1077H946V1084L940 1090Z" fill="#eef2f8" stroke="#98a3b3" stroke-width="1.1" stroke-linejoin="round"/>
 <circle cx="943" cy="1080" r="0.9" fill="#8a9bb2"/>
</svg>
</body></html>
